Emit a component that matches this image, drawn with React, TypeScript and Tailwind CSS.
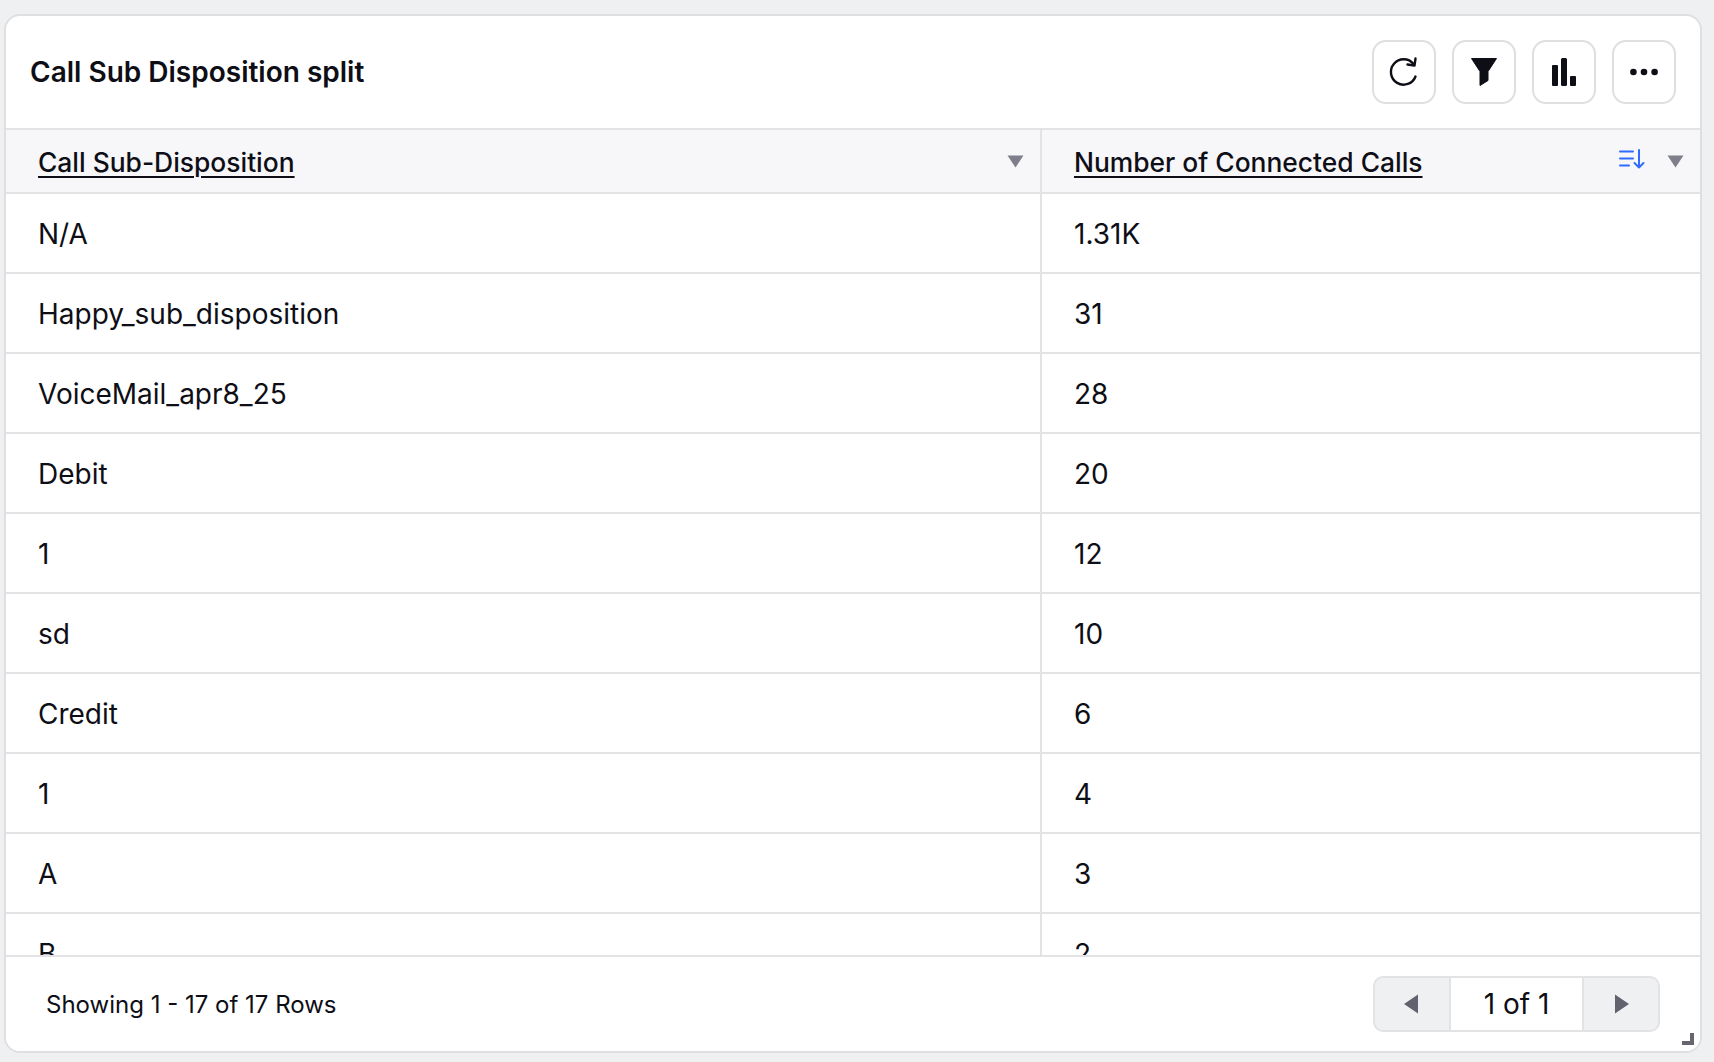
import React from "react";

const rows: [string, string][] = [
  ["N/A", "1.31K"],
  ["Happy_sub_disposition", "31"],
  ["VoiceMail_apr8_25", "28"],
  ["Debit", "20"],
  ["1", "12"],
  ["sd", "10"],
  ["Credit", "6"],
  ["1", "4"],
  ["A", "3"],
  ["B", "2"],
];

function IconButton({ children }: { children: React.ReactNode }) {
  return (
    <button className="flex h-[64px] w-[64px] items-center justify-center rounded-[14px] border-2 border-[#dfdfe1] bg-white">
      {children}
    </button>
  );
}

function Caret() {
  return (
    <svg width="17" height="13" viewBox="0 0 17 13">
      <path d="M0.5 0.5H16.5L8.5 12.5Z" fill="#7f7f8b" />
    </svg>
  );
}

export default function App() {
  return (
    <div className="h-[1062px] w-[1714px] overflow-hidden bg-[#eef0f2] pb-[9px] pl-[4px] pr-[12px] pt-[14px] font-['Inter',sans-serif] text-[#0e0e16]">
      <div className="relative flex h-full flex-col overflow-hidden rounded-[16px] border-2 border-[#dfdfe1] bg-white">
        <div className="flex h-[112px] shrink-0 items-center justify-between pl-[24px] pr-[24px]">
          <div className="text-[28px] font-semibold leading-[36px]">Call Sub Disposition split</div>
          <div className="flex gap-[16px]">
            <IconButton>
              <svg width="32" height="32" viewBox="0 0 32 32" fill="none" stroke="#0e0e16" strokeWidth="2.4" strokeLinecap="round">
                <path d="M27.5 20.5A12.7 12.7 0 1 1 25.5 8" />
                <path d="M27.5 2.5L26.5 9.5L19.5 8.5" strokeLinejoin="round" />
              </svg>
            </IconButton>
            <IconButton>
              <svg width="28" height="30" viewBox="0 0 28 30">
                <path d="M1.5 1.5H26.5L18 14.5V23.5L10 28.5V14.5Z" fill="#0e0e16" stroke="#0e0e16" strokeLinejoin="round" />
              </svg>
            </IconButton>
            <IconButton>
              <svg width="24" height="28" viewBox="0 0 24 28" fill="#0e0e16">
                <rect x="0" y="7" width="6" height="21" rx="1" />
                <rect x="9" y="0" width="6" height="28" rx="1.5" />
                <rect x="18" y="18" width="6" height="10" rx="1" />
              </svg>
            </IconButton>
            <IconButton>
              <svg width="28" height="8" viewBox="0 0 28 8" fill="#0e0e16">
                <circle cx="3.4" cy="4" r="3.3" />
                <circle cx="14" cy="4" r="3.3" />
                <circle cx="24.6" cy="4" r="3.3" />
              </svg>
            </IconButton>
          </div>
        </div>

        <div className="min-h-0 flex-1 overflow-hidden">
          <div className="grid h-[66px] grid-cols-[1036px_1fr] border-y-2 border-[#e3e3e6] bg-[#f7f7f9]">
            <div className="flex items-center justify-between border-r-2 border-[#e3e3e6] pl-[32px] pr-[16px] pt-[1px]">
              <span className="text-[26.4px] font-medium leading-[36px] underline underline-offset-[4px] decoration-2">Call Sub-Disposition</span>
              <Caret />
            </div>
            <div className="flex items-center justify-between pl-[32px] pr-[16px] pt-[1px]">
              <span className="text-[26.4px] font-medium leading-[36px] underline underline-offset-[4px] decoration-2">Number of Connected Calls</span>
              <div className="flex items-center gap-[22px]">
                <svg width="26" height="20" viewBox="0 0 26 20" fill="none" stroke="#2f6bff" strokeWidth="2" strokeLinecap="round" className="-mt-[6px]">
                  <path d="M1 2.5H14M1 9.5H14M1 16.5H10" />
                  <path d="M20 1V18.5M15.5 14L20 18.5L24.5 14" strokeLinejoin="round" />
                </svg>
                <Caret />
              </div>
            </div>
          </div>
          {rows.map(([a, b], i) => (
            <div key={i} className="grid h-[80px] grid-cols-[1036px_1fr] border-b-2 border-[#e3e3e6]">
              <div className="flex items-center border-r-2 border-[#e3e3e6] pl-[32px] pt-[2px] text-[28px] leading-[36px]">{a}</div>
              <div className="flex items-center pl-[32px] pt-[2px] text-[28px] leading-[36px]">{b}</div>
            </div>
          ))}
        </div>

        <div className="flex h-[96px] shrink-0 items-center justify-between border-t-2 border-[#e3e3e6] bg-white pl-[40px] pr-[40px]">
          <div className="pt-[2px] text-[24px] leading-[32px]">Showing 1 - 17 of 17 Rows</div>
          <div className="flex h-[56px] w-[287px] overflow-hidden rounded-[10px] border-2 border-[#e3e3e6] bg-[#eff0f2]">
            <div className="flex w-[74px] items-center justify-center">
              <svg width="16" height="20" viewBox="0 0 16 20"><path d="M14 0.5V19.5L0 10Z" fill="#62626e" /></svg>
            </div>
            <div className="flex flex-1 items-center justify-center border-x-2 border-[#e3e3e6] bg-white text-[28px] leading-[36px]">1 of 1</div>
            <div className="flex w-[74px] items-center justify-center">
              <svg width="16" height="20" viewBox="0 0 16 20"><path d="M2 0.5V19.5L16 10Z" fill="#62626e" /></svg>
            </div>
          </div>
        </div>

        <svg width="12" height="12" viewBox="0 0 12 12" className="absolute bottom-[6px] right-[6px]">
          <path d="M8 0H12V12H0V8H8Z" fill="#66666f" />
        </svg>
      </div>
    </div>
  );
}
